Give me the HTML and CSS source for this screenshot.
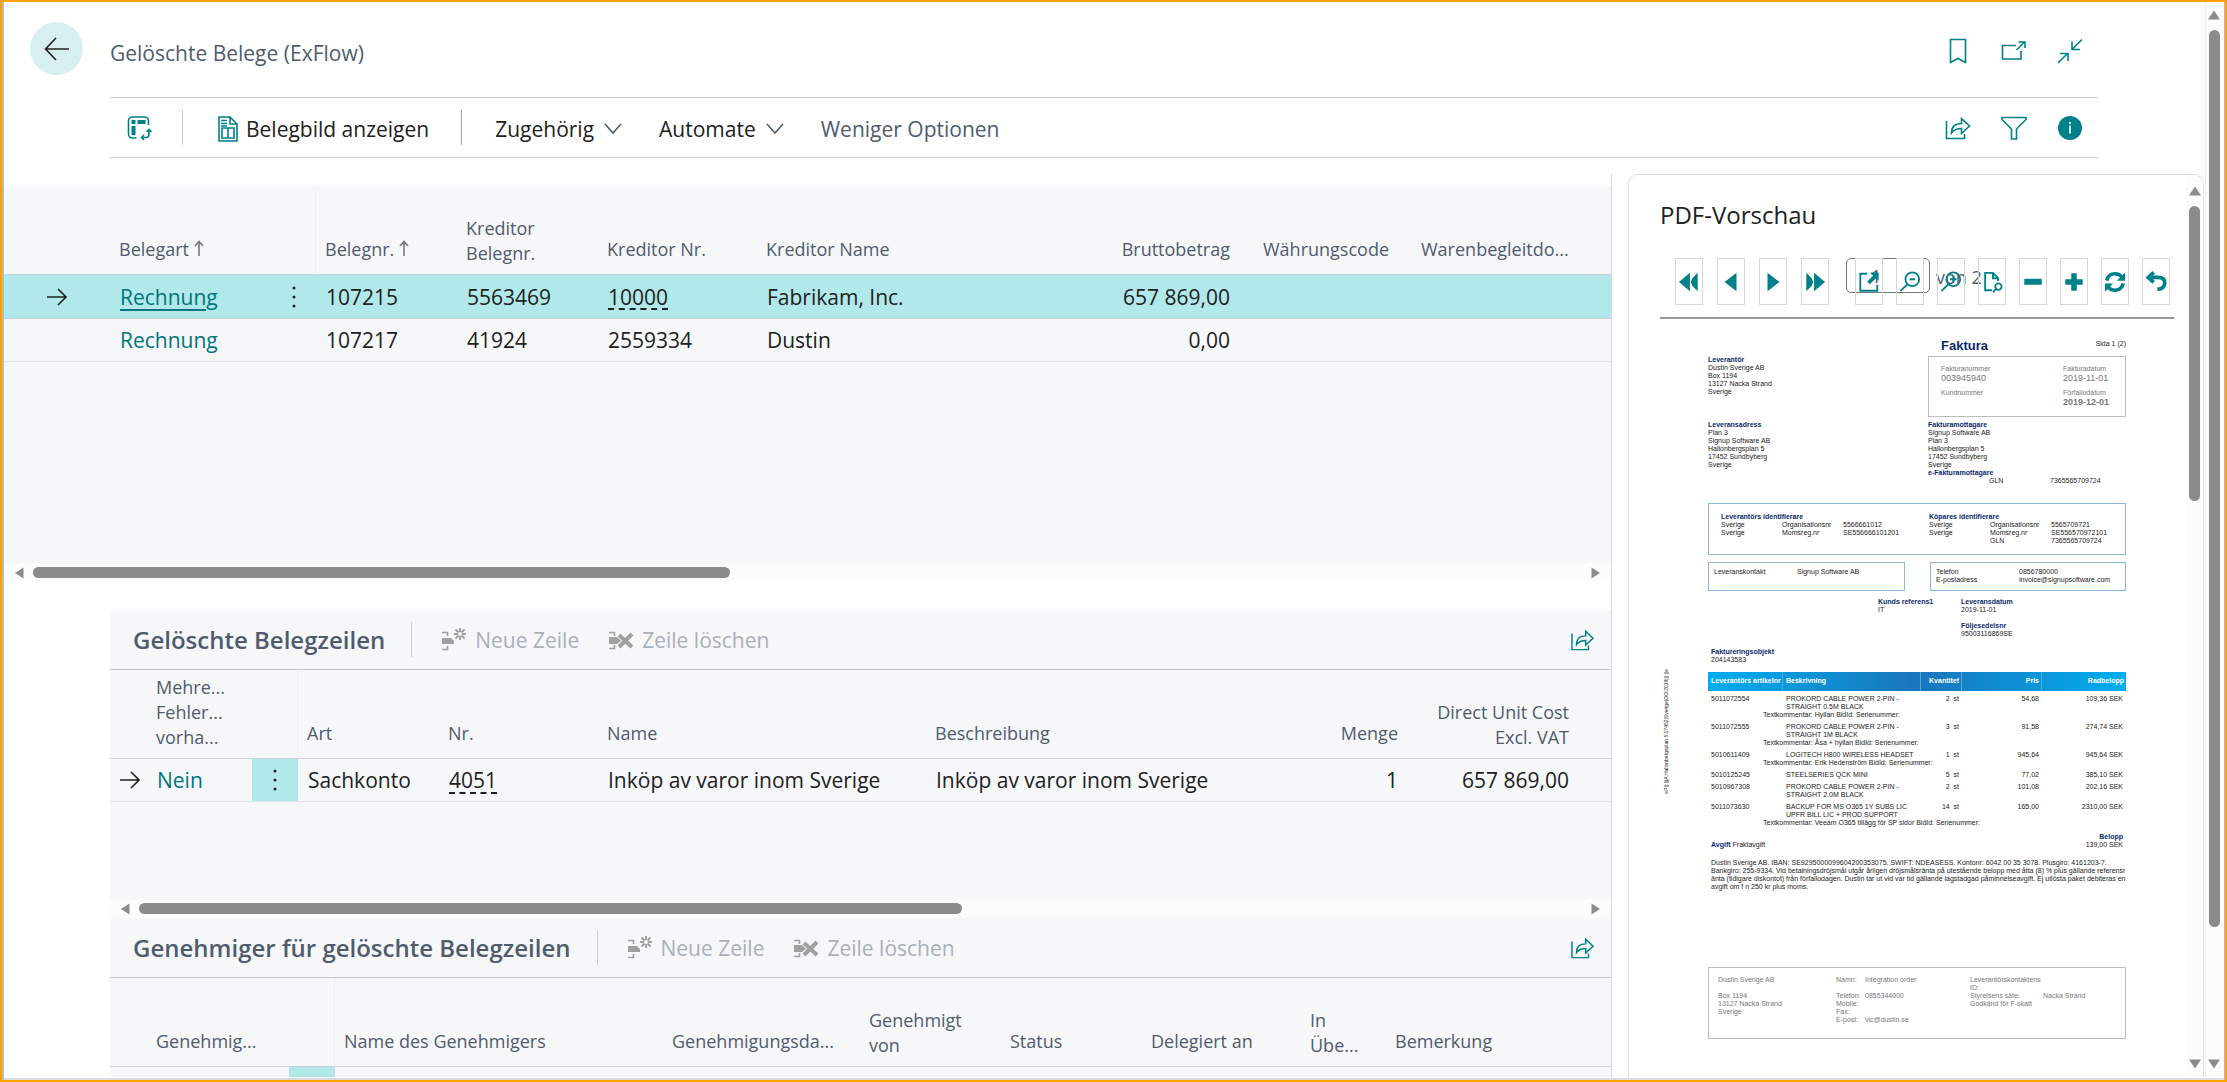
FILE: index.html
```html
<!DOCTYPE html>
<html lang="de">
<head>
<meta charset="utf-8">
<title>Gelöschte Belege (ExFlow)</title>
<meta name="viewport" content="width=device-width, initial-scale=1">
<link rel="stylesheet" href="styles.css">
</head>
<body>
<svg class="sprite" aria-hidden="true">
  <symbol id="i-share" viewBox="0 0 26 24"><path d="M1.500 5v17.500h18V18M6.500 17c0-6 3.500-9.500 10-9.500V2.500l8 7.500-8 7.500v-5c-5 0-7.500 1-10 4.500z"/></symbol>
  <symbol id="i-newline" viewBox="0 0 26 24"><path class="fill" d="M0 10h9l3 3v3H0z"/><path d="M0 4.500h5.500V8M0 21.500h5.500V18"/><path class="sun" d="M18 0v12M12 6h12M13.500 1.500l9 9M22.500 1.500l-9 9"/><circle class="hole" cx="18" cy="6" r="2"/></symbol>
  <symbol id="i-delline" viewBox="0 0 26 24"><path class="fill" d="M0 9h8l4 4-4 3H0z"/><path d="M0 4.500h5.500V8M0 20.500h5.500V17"/><path class="cross" d="M10 7l13 12M23 6L10 19"/></symbol>
  <symbol id="i-row" viewBox="0 0 20 18"><path d="M0 9h19M11 1l8 8-8 8"/></symbol>
  <symbol id="i-dots" viewBox="0 0 4 24"><circle cx="2" cy="3" r="1.500"/><circle cx="2" cy="12" r="1.500"/><circle cx="2" cy="21" r="1.500"/></symbol>
  <symbol id="i-sort" viewBox="0 0 10 16"><path d="M5 16V2M1 6l4-4.500L9 6"/></symbol>
  <symbol id="i-chev" viewBox="0 0 18 12"><path d="M1 1l8 9 8-9"/></symbol>
  <symbol id="i-left" viewBox="0 0 10 12"><path d="M9.500.500v11L1 6z"/></symbol>
  <symbol id="i-right" viewBox="0 0 10 12"><path d="M.500.500v11L9 6z"/></symbol>
  <symbol id="i-up" viewBox="0 0 12 10"><path d="M6 .500L12 9.500H0z"/></symbol>
  <symbol id="i-down" viewBox="0 0 12 10"><path d="M6 9.500L12 .500H0z"/></symbol>
</svg>

<div class="window">
  <div class="page">
    <header class="titlebar">
      <button class="back" aria-label="Zurück"><svg viewBox="0 0 26 24"><path d="M25 12H1.500M12 1L1.500 12 12 23"/></svg></button>
      <h1>Gelöschte Belege (ExFlow)</h1>
      <div class="icons">
        <button aria-label="Lesezeichen"><svg viewBox="0 0 26 26"><path d="M5.500 1.500h15v23L13 20.500l-7.500 4z"/></svg></button>
        <button aria-label="In neuem Fenster öffnen"><svg viewBox="0 0 26 26"><path d="M15 7.500H1.500v13.500H20V13M15.500 12L23.500 4M17.500 4h6.500v6"/></svg></button>
        <button aria-label="Verkleinern"><svg viewBox="0 0 26 26"><path d="M25 1.500L15.500 11M15 3.500V11.500h8M1 25l9.500-9.500M3 15.500h8v7.500"/></svg></button>
      </div>
    </header>

    <nav class="actions">
      <button class="act view" aria-label="Ansicht"><svg viewBox="0 0 24 24"><path d="M9 22H5a4 4 0 0 1-4-4V5a4 4 0 0 1 4-4h12a4 4 0 0 1 4 4v4M14.500 21.500h4a3 3 0 0 0 3-3V14M19 16l2.500-2.500L24 16M16.500 19L14 21.500l2.500 2.500"/><path class="fill" d="M4 4h4v4H4zM10 4h8v4h-8zM4 10h4v9H4z"/></svg></button>
      <span class="sep"></span>
      <button class="act show"><svg viewBox="0 0 20 26"><path d="M1 1h11l7 7v17H1zM12 1v7h7M3 4.500h6M3 7.500h6M3 10h6M4 12h12v10H4zM10 12v10"/></svg>Belegbild anzeigen</button>
      <span class="sep dark"></span>
      <button class="act menu">Zugehörig<svg><use href="#i-chev"/></svg></button>
      <button class="act menu">Automate<svg><use href="#i-chev"/></svg></button>
      <button class="act less">Weniger Optionen</button>
      <div class="icons">
        <button aria-label="Teilen"><svg viewBox="0 0 26 24"><use href="#i-share"/></svg></button>
        <button aria-label="Filtern"><svg viewBox="0 0 26 24"><path d="M1 1.500h24v2l-9.500 9.500v10h-5V13L1 3.500z"/></svg></button>
        <button aria-label="Info"><svg viewBox="0 0 26 24"><circle class="fill" cx="13" cy="12" r="12"/><path class="inv" d="M13 9.500v8M13 6v2"/></svg></button>
      </div>
    </nav>

    <div class="content">
      <main>
        <section class="list">
          <div class="grid-area">
            <table>
              <colgroup><col class="w106"><col class="w162"><col class="w44"><col class="w141"><col class="w141"><col class="w159"><col class="w338"><col class="w159"><col class="w158"><col></colgroup>
              <thead><tr><th></th><th>Belegart <svg class="sort"><use href="#i-sort"/></svg></th><th class="edge"></th><th>Belegnr. <svg class="sort"><use href="#i-sort"/></svg></th><th class="two">Kreditor<br>Belegnr.</th><th>Kreditor Nr.</th><th>Kreditor Name</th><th class="num">Bruttobetrag</th><th>Währungscode</th><th>Warenbegleitdo...</th></tr></thead>
              <tbody>
                <tr class="sel"><td class="mark"><svg><use href="#i-row"/></svg></td><td><a class="on" href="#">Rechnung</a></td><td class="dots"><button aria-label="Mehr"><svg><use href="#i-dots"/></svg></button></td><td>107215</td><td>5563469</td><td><a class="dash" href="#">10000</a></td><td>Fabrikam, Inc.</td><td class="num">657&nbsp;869,00</td><td></td><td></td></tr>
                <tr><td></td><td><a href="#">Rechnung</a></td><td></td><td>107217</td><td>41924</td><td>2559334</td><td>Dustin</td><td class="num">0,00</td><td></td><td></td></tr>
              </tbody>
            </table>
          </div>
          <div class="hbar"><svg><use href="#i-left"/></svg><div class="rail"><div class="thumb" style="width:45%"></div></div><svg><use href="#i-right"/></svg></div>
        </section>

        <section class="part lines">
          <header><h2>Gelöschte Belegzeilen</h2><span class="sep"></span><button disabled><svg><use href="#i-newline"/></svg>Neue Zeile</button><button disabled><svg><use href="#i-delline"/></svg>Zeile löschen</button><button class="share" aria-label="Teilen"><svg><use href="#i-share"/></svg></button></header>
          <div class="grid-area">
            <table>
              <colgroup><col class="w37"><col class="w105"><col class="w46"><col class="w141"><col class="w159"><col class="w328"><col class="w328"><col class="w168"><col class="w171"><col></colgroup>
              <thead><tr><th></th><th class="two">Mehre...<br>Fehler...<br>vorha...</th><th class="edge"></th><th>Art</th><th>Nr.</th><th>Name</th><th>Beschreibung</th><th class="num">Menge</th><th class="num two">Direct Unit Cost<br>Excl. VAT</th><th></th></tr></thead>
              <tbody>
                <tr><td class="mark"><svg><use href="#i-row"/></svg></td><td><a href="#">Nein</a></td><td class="dots hot"><button aria-label="Mehr"><svg><use href="#i-dots"/></svg></button></td><td>Sachkonto</td><td><a class="dash" href="#">4051</a></td><td>Inköp av varor inom Sverige</td><td>Inköp av varor inom Sverige</td><td class="num">1</td><td class="num">657&nbsp;869,00</td><td></td></tr>
              </tbody>
            </table>
          </div>
          <div class="hbar"><svg><use href="#i-left"/></svg><div class="rail"><div class="thumb" style="width:57%"></div></div><svg><use href="#i-right"/></svg></div>
        </section>

        <section class="part approvers">
          <header><h2>Genehmiger für gelöschte Belegzeilen</h2><span class="sep"></span><button disabled><svg><use href="#i-newline"/></svg>Neue Zeile</button><button disabled><svg><use href="#i-delline"/></svg>Zeile löschen</button><button class="share" aria-label="Teilen"><svg><use href="#i-share"/></svg></button></header>
          <div class="grid-area">
            <table>
              <colgroup><col class="w37"><col class="w142"><col class="w46"><col class="w328"><col class="w197"><col class="w141"><col class="w141"><col class="w159"><col class="w85"><col></colgroup>
              <thead><tr><th></th><th>Genehmig...</th><th class="edge"></th><th>Name des Genehmigers</th><th>Genehmigungsda...</th><th class="two">Genehmigt<br>von</th><th>Status</th><th>Delegiert an</th><th class="two">In<br>Übe...</th><th>Bemerkung</th></tr></thead>
              <tbody>
                <tr><td></td><td></td><td class="dots hot"><button aria-label="Mehr"><svg><use href="#i-dots"/></svg></button></td><td></td><td></td><td></td><td></td><td></td><td class="check"><input type="checkbox" aria-label="In Überprüfung"></td><td></td></tr>
              </tbody>
            </table>
          </div>
        </section>
      </main>

      <aside>
        <div class="viewer">
          <h2>PDF-Vorschau</h2>
          <div class="pdfbar">
            <button aria-label="Erste Seite"><svg viewBox="0 0 24 24"><path class="fill" d="M1 12L13 2v20zM14 12l1.500-4L21.500 2v20l-6-6z"/></svg></button>
            <button aria-label="Vorherige Seite"><svg viewBox="0 0 24 24"><path class="fill" d="M5 12L18 2v20z"/></svg></button>
            <button aria-label="Nächste Seite"><svg viewBox="0 0 24 24"><path class="fill" d="M19 12L6 2v20z"/></svg></button>
            <button aria-label="Letzte Seite"><svg viewBox="0 0 24 24"><path class="fill" d="M23 12L11 2v20zM10 12L8.500 8 2.500 2v20l6-6z"/></svg></button>
            <input type="text" value="1" aria-label="Seite"><span class="of">von 2</span>
            <div class="tools">
              <button aria-label="Öffnen"><svg viewBox="0 0 24 24"><path class="b2" d="M10 3H2.500v18.500H21V15"/><path class="b3" d="M11.500 13L20 4.500"/><path class="fill" d="M13 1.500h9.500V11z"/></svg></button>
              <button aria-label="Verkleinern"><svg viewBox="0 0 24 24"><circle class="b2" cx="14.500" cy="9" r="7.500"/><path class="b2" d="M9 14.500L1.500 22M11.500 9h6"/></svg></button>
              <button aria-label="Vergrößern"><svg viewBox="0 0 24 24"><circle class="b2" cx="14.500" cy="9" r="7.500"/><path class="b2" d="M9 14.500L1.500 22M11 9h7M14.500 5.500v7"/></svg></button>
              <button aria-label="Seite anpassen"><svg viewBox="0 0 24 24"><path class="b2" d="M12 21H4.500V2H13l5.500 5.500V11M13 2v6h5.500"/><circle class="b2" cx="19" cy="17" r="3.500"/><path class="b2" d="M16.500 19.500L13 23"/></svg></button>
              <button aria-label="Minus"><svg viewBox="0 0 24 24"><path class="fill" d="M2.500 8.500h19v6.500h-19z"/></svg></button>
              <button aria-label="Plus"><svg viewBox="0 0 24 24"><path class="fill" d="M2.500 9h6.500V2.500h6V9h6.500v6H15v6.500H9V15H2.500z"/></svg></button>
              <button aria-label="Neu laden"><svg viewBox="0 0 24 24"><path class="b4" d="M3 10.500C4 5.500 8 3 12 3s6 1.500 8 4M21 13.500C20 18.500 16 21 12 21s-6-1.500-8-4"/><path class="fill" d="M23 1.500V10.500h-9zM1 22.500V13.500h9z"/></svg></button>
              <button aria-label="Rückgängig"><svg viewBox="0 0 24 24"><path class="b3" d="M9.500 1.500L3.500 7l6 5.500M3.500 7H14c5 0 7.500 2.500 7.500 6s-2.500 6.500-8 7"/></svg></button>
            </div>
          </div>

          <article class="invoice">
            <p class="margin-note">eP||:||jA:Hallonbergsplan 5:17452|Sverige|OO:2019|||:||e</p>
            <div class="pair head"><span></span><div class="split ind"><b class="big">Faktura</b><span>Sida 1 (2)</span></div></div>
            <div class="pair">
              <address><b>Leverantör</b><br>Dustin Sverige AB<br>Box 1194<br>13127 Nacka Strand<br>Sverige</address>
              <dl class="facts">
                <div><dt>Fakturanummer</dt><dd>003945940</dd></div><div><dt>Fakturadatum</dt><dd>2019-11-01</dd></div>
                <div><dt>Kundnummer</dt></div><div><dt>Förfallodatum</dt><dd class="strong">2019-12-01</dd></div>
              </dl>
            </div>
            <div class="pair parties">
              <address><b>Leveransadress</b><br>Plan 3<br>Signup Software AB<br>Hallonbergsplan 5<br>17452 Sundbyberg<br>Sverige</address>
              <div><address><b>Fakturamottagare</b><br>Signup Software AB<br>Plan 3<br>Hallonbergsplan 5<br>17452 Sundbyberg<br>Sverige<br><b>e-Fakturamottagare</b></address>
              <div class="trio"><span></span><span>GLN</span><span>7365565709724</span></div></div>
            </div>
            <div class="ids">
              <div><b>Leverantörs identifierare</b><div class="trio"><span>Sverige</span><span>Organisationsnr</span><span>5566661012</span><span>Sverige</span><span>Momsreg.nr</span><span>SE556666101201</span></div></div>
              <div><b>Köpares identifierare</b><div class="trio"><span>Sverige</span><span>Organisationsnr</span><span>5565709721</span><span>Sverige</span><span>Momsreg.nr</span><span>SE556570972101</span><span></span><span>GLN</span><span>7365565709724</span></div></div>
            </div>
            <div class="contacts">
              <div class="duo"><span>Leveranskontakt</span><span>Signup Software AB</span></div>
              <div class="duo"><span>Telefon</span><span>0856780000</span><span>E-postadress</span><span>invoice@signupsoftware.com</span></div>
            </div>
            <div class="refs">
              <p><b>Kunds referens1</b><br>IT</p>
              <div><p><b>Leveransdatum</b><br>2019-11-01</p><p><b>Följesedelsnr</b><br>95003116869SE</p></div>
            </div>
            <p class="object"><b>Faktureringsobjekt</b><br>204143583</p>
            <table class="items">
              <colgroup><col class="c-art"><col><col class="c-qty"><col class="c-price"><col class="c-sum"></colgroup>
              <thead><tr><th>Leverantörs artikelnr</th><th>Beskrivning</th><th class="r">Kvantitet</th><th class="r">Pris</th><th class="r">Radbelopp</th></tr></thead>
              <tbody>
                <tr class="item"><td>5011072554</td><td>PROKORD CABLE POWER 2-PIN -<br>STRAIGHT 0.5M BLACK</td><td class="r">2&nbsp; st</td><td class="r">54,68</td><td class="r">109,36 SEK</td></tr>
                <tr class="note"><td colspan="5">Textkommentar: Hyllan BidId: Serienummer:</td></tr>
                <tr class="item"><td>5011072555</td><td>PROKORD CABLE POWER 2-PIN -<br>STRAIGHT 1M BLACK</td><td class="r">3&nbsp; st</td><td class="r">91,58</td><td class="r">274,74 SEK</td></tr>
                <tr class="note"><td colspan="5">Textkommentar: Åsa + hyllan BidId: Serienummer:</td></tr>
                <tr class="item"><td>5010611409</td><td>LOGITECH H800 WIRELESS HEADSET</td><td class="r">1&nbsp; st</td><td class="r">945,64</td><td class="r">945,64 SEK</td></tr>
                <tr class="note"><td colspan="5">Textkommentar: Erik Hedenström BidId: Serienummer:</td></tr>
                <tr class="item"><td>5010125245</td><td>STEELSERIES QCK MINI</td><td class="r">5&nbsp; st</td><td class="r">77,02</td><td class="r">385,10 SEK</td></tr>
                <tr class="item"><td>5010967308</td><td>PROKORD CABLE POWER 2-PIN -<br>STRAIGHT 2.0M BLACK</td><td class="r">2&nbsp; st</td><td class="r">101,08</td><td class="r">202,16 SEK</td></tr>
                <tr class="item"><td>5011073630</td><td>BACKUP FOR MS O365 1Y SUBS LIC<br>UPFR BILL LIC + PROD SUPPORT</td><td class="r">14&nbsp; st</td><td class="r">165,00</td><td class="r">2310,00 SEK</td></tr>
                <tr class="note"><td colspan="5">Textkommentar: Veeam O365 tillägg för SP sidor BidId: Serienummer:</td></tr>
              </tbody>
            </table>
            <div class="fee"><p><b>Avgift</b> Fraktavgift</p><p class="r"><b>Belopp</b><br>139,00 SEK</p></div>
            <p class="terms">Dustin Sverige AB. IBAN: SE9295000099604200353075. SWIFT: NDEASESS. Kontonr: 6042 00 35 3078. Plusgiro: 4161203-7.<br>Bankgiro: 255-9334. Vid betalningsdröjsmål utgår årligen dröjsmålsränta på utestående belopp med åtta (8) % plus gällande referensr<br>änta (tidigare diskontot) från förfallodagen. Dustin tar ut vid var tid gällande lagstadgad påminnelseavgift. Ej utlösta paket debiteras en<br>avgift om f n 250 kr plus moms.</p>
            <footer>
              <p>Dustin Sverige AB<br><br>Box 1194<br>13127 Nacka Strand<br>Sverige</p>
              <p>Namn:<br><br>Telefon:<br>Mobile:<br>Fax:<br>E-post:</p>
              <p>Integration order<br><br>0855344000<br><br><br>vic@dustin.se</p>
              <p>Leverantörskontaktens<br>ID:<br>Styrelsens säte:<br>Godkänd för F-skatt</p>
              <p><br><br>Nacka Strand</p>
            </footer>
          </article>
        </div>
        <div class="vbar"><svg><use href="#i-up"/></svg><div class="rail"><div class="thumb" style="height:35%"></div></div><svg><use href="#i-down"/></svg></div>
      </aside>
    </div>
  </div>
  <div class="vbar outer"><svg><use href="#i-up"/></svg><div class="rail"><div class="thumb" style="height:88%"></div></div><svg><use href="#i-down"/></svg></div>
</div>
</body>
</html>
```
FILE: styles.css
```css
* { box-sizing: border-box; }
body {
  margin: 0;
  font-family: "Segoe UI", "Open Sans", sans-serif;
  font-size: 21px;
  line-height: 30px;
  color: #212121;
  background: #fff;
}
h1, h2, p, dl, dd { margin: 0; font-weight: 400; }
address { font-style: normal; }
button { margin: 0; padding: 0; border: 0; background: none; font: inherit; color: inherit; display: flex; align-items: center; }
svg { fill: none; stroke: currentColor; stroke-width: 1.600; flex: none; overflow: visible; }
svg .fill { fill: currentColor; stroke: none; }
.sprite { position: absolute; width: 0; height: 0; }
a { color: #00757d; text-decoration: none; }
a.on { text-decoration: underline; text-decoration-thickness: 2px; text-underline-offset: 4px; }
a.dash { color: #212121; text-decoration: underline dashed 2px; text-underline-offset: 4px; }

.window {
  height: 100vh;
  overflow: hidden;
  display: flex;
  border: 2px solid #f9a200;
  background: #fff;
  box-shadow: inset 2px 0 #b4bcc9, inset -1px 0 #b4bcc9, inset 0 -2px #d9dde1;
  padding: 0 1px 3px 2px;
}
.page { flex: 1; min-width: 0; display: flex; flex-direction: column; }

.titlebar { display: flex; align-items: flex-start; height: 95px; flex: none; padding-right: 107px; }
.back { width: 53px; height: 53px; margin: 20px 27px 0 26px; border-radius: 50%; background: #d8eff1; justify-content: center; }
.back svg { width: 26px; height: 24px; }
.titlebar h1 { font-size: 21px; margin-top: 36px; color: #505c6d; flex: 1; }
.icons { display: flex; gap: 30px; margin-left: auto; color: #008089; }
.icons svg { width: 26px; height: 26px; }
.titlebar .icons { margin-top: 36px; padding-right: 15px; }

.actions { display: flex; align-items: center; height: 61px; flex: none; margin: 0 107px 0 106px; border: solid #ced0d5; border-width: 1px 0; }
.actions svg { color: #008089; }
.sep { width: 1px; height: 35px; background: #c9ccd2; flex: none; }
.view { margin: 0 30px 0 17px; }
.view svg { width: 25px; height: 24px; }
.show { margin: 0 32px 0 35px; gap: 8px; }
.show svg { width: 20px; height: 26px; }
.show, .menu, .less { padding-top: 2px; }
.sep.dark { background: #9fa5af; }
.menu { gap: 10px; margin-left: 33px; }
.menu + .menu { margin-left: 37px; }
.actions .menu svg { width: 18px; height: 12px; color: #505c6d; }
.less { margin-left: 37px; color: #505c6d; }
.actions .icons { padding-right: 15px; }
.actions .icons svg { width: 26px; height: 24px; }
svg .inv { stroke: #fff; }

.content { flex: 1; min-height: 0; display: flex; margin-top: 16px; }
main { flex: 1; min-width: 0; padding-top: 12px; border-right: 1px solid #d8dadf; overflow: hidden; }
.list { margin-bottom: 28px; }
.grid-area { background: #f6f7f9; overflow: hidden; }
.list .grid-area { height: 377px; }
.lines .grid-area { height: 229px; }
main table { width: 100%; table-layout: fixed; border-collapse: separate; border-spacing: 0; }
main th { height: 89px; padding: 0 0 12px 9px; vertical-align: bottom; text-align: left; font-size: 18px; line-height: 25px; font-weight: 400; color: #505c6d; white-space: nowrap; border-bottom: 1px solid #ced1d6; }
main th.two { padding-bottom: 8px; }
main th.edge { border-right: 1px solid #eceef1; }
main td { height: 43px; padding: 0 0 0 10px; white-space: nowrap; border-bottom: 1px solid #e2e4e8; }
main .num { text-align: right; padding-right: 24px; }
main td.dots { padding: 0; }
.dots button { width: 100%; justify-content: center; }
.dots svg { width: 4px; height: 24px; fill: #212121; stroke: none; }
.hot { background: #b1e9eb; }
.mark svg { display: block; width: 20px; height: 18px; }
.list .mark { padding-left: 43px; }
.sel td { height: 44px; background: #b1e9eb; border-bottom-color: #ced1d6; }
.sort { width: 10px; height: 16px; color: #777; }
.check input { display: block; margin: 0 auto; width: 20px; height: 20px; }

.w37 { width: 37px; }
.w44 { width: 44px; }
.w46 { width: 46px; }
.w85 { width: 85px; }
.w105 { width: 105px; }
.w106 { width: 106px; }
.w141 { width: 141px; }
.w142 { width: 142px; }
.w158 { width: 158px; }
.w159 { width: 159px; }
.w162 { width: 162px; }
.w168 { width: 168px; }
.w171 { width: 171px; }
.w197 { width: 197px; }
.w328 { width: 328px; }
.w338 { width: 338px; }

.part { margin-left: 106px; }
.part header { display: flex; align-items: center; height: 60px; padding: 0 16px 0 23px; background: #f6f7f9; border-bottom: 1px solid #c5c8ce; }
.part h2 { font-size: 24px; font-weight: 600; color: #505c6d; margin-right: 26px; }
.part header button { margin-left: 30px; gap: 7px; color: #a8b0ba; }
.part header button svg { width: 26px; height: 24px; color: #a0a0a0; }
.sun { stroke-width: 2; }
.hole { fill: #f6f7f9; stroke: none; }
.cross { stroke-width: 4; }
.part header .share { margin-left: auto; }
.part header .share svg { color: #008089; width: 25px; height: 22px; }

.hbar { display: flex; align-items: center; gap: 9px; height: 19px; padding: 0 10px; background: #fcfcfc; }
.hbar svg { width: 10px; height: 12px; fill: #8b8b8b; stroke: none; }
.rail { flex: 1; }
.thumb { background: #8b8b8b; border-radius: 6px; }
.hbar .thumb { height: 11px; }
.vbar { display: flex; flex-direction: column; align-items: center; gap: 10px; width: 17px; padding: 11px 0 8px; background: #fcfcfc; }
.vbar svg { width: 12px; height: 10px; fill: #8b8b8b; stroke: none; }
.vbar .thumb { width: 11px; }
.vbar.outer { width: 19px; padding: 8px 2px 8px 0; border-left: 1px solid #ececef; }

aside { flex: none; width: 576px; margin: 0 1px 0 16px; display: flex; border: 1px solid #dcdde5; border-bottom: 0; border-radius: 10px 10px 0 0; overflow: hidden; }
.viewer { flex: 1; min-width: 0; padding: 24px 12px 0 31px; }
.viewer h2 { font-size: 24px; font-weight: 500; line-height: 32px; }
.pdfbar { position: relative; display: flex; gap: 14px; height: 61px; margin-top: 27px; padding-left: 15px; border-bottom: 2px solid #999; }
.pdfbar button { width: 28px; height: 47px; justify-content: center; border: 1px solid #d6d6d6; color: #008089; }
.pdfbar svg { width: 22px; height: 22px; }
.pdfbar .b2 { stroke-width: 2; }
.pdfbar .b3 { stroke-width: 4; }
.pdfbar .b4 { stroke-width: 4; }
.pdfbar input { width: 84px; height: 35px; margin-left: 3px; padding: 0 0 0 24px; font: 18px/30px "Segoe UI", "Open Sans", sans-serif; color: #505c6d; border: 1px solid #767676; border-radius: 5px; background: #fff; }
.of { margin-left: -8px; font-size: 18px; line-height: 38px; color: #505c6d; }
.tools { position: absolute; left: 195px; top: 0; display: flex; gap: 13px; }

.invoice { position: relative; margin: 0 48px; padding-top: 19px; font: 7px/8px "Liberation Sans", Arial, sans-serif; color: #222; white-space: nowrap; }
.invoice b { color: #0b2a6b; }
.margin-note { position: absolute; left: -46px; top: 350px; font-size: 5px; writing-mode: vertical-rl; transform: rotate(180deg); }
.pair { display: grid; grid-template-columns: 220px 1fr; }
.head { height: 18px; }
.split { display: flex; justify-content: space-between; padding-left: 13px; line-height: 12px; }
.invoice .big { font-size: 13px; line-height: 16px; }
.facts { display: grid; grid-template-columns: 122px 1fr; align-content: start; row-gap: 6px; height: 61px; padding: 8px 0 0 12px; border: 1px solid #bbb; color: #777; }
.facts dd { font-size: 9px; line-height: 10px; }
.facts .strong { font-weight: 700; }
.parties { margin-top: 4px; }
.trio { display: grid; grid-template-columns: 61px 61px 1fr; }
.ids { display: grid; grid-template-columns: 208px 1fr; height: 52px; margin-top: 18px; padding: 9px 0 0 12px; border: 1px solid #8ab8dc; }
.contacts { display: grid; grid-template-columns: 197px 196px; justify-content: space-between; margin-top: 7px; }
.duo { display: grid; grid-template-columns: 83px 1fr; align-content: start; height: 29px; padding: 5px 0 0 5px; border: 1px solid #8ab8dc; }
.refs { display: grid; grid-template-columns: 83px 1fr; margin-top: 7px; padding-left: 170px; }
.refs div { display: grid; row-gap: 8px; }
.object { margin-top: 10px; padding-left: 3px; }
.items { width: 100%; margin-top: 8px; table-layout: fixed; border-collapse: separate; border-spacing: 0; }
.c-art { width: 75px; }
.c-qty { width: 41px; }
.c-price { width: 80px; }
.c-sum { width: 84px; }
.items thead { background: linear-gradient(90deg, #00aeef, #1b75bb 50%, #00aeef); color: #fff; }
.items th { height: 19px; padding: 0 2px 2px 3px; text-align: left; border-right: 1px solid #4fa9e0; }
.items th:last-child { border-right: 0; }
.items td { padding: 0 3px; vertical-align: top; }
.items .item td { padding-top: 4px; }
.items .note td { padding-left: 55px; }
.invoice .r { text-align: right; }
.fee { display: flex; justify-content: space-between; align-items: flex-end; margin-top: 6px; padding: 0 3px; }
.terms { margin-top: 10px; padding-left: 3px; }
.invoice footer { display: grid; grid-template-columns: 118px 29px 105px 73px 1fr; align-content: start; height: 72px; margin-top: 76px; padding: 8px 0 0 9px; border: 1px solid #bbb; color: #777; }
```
